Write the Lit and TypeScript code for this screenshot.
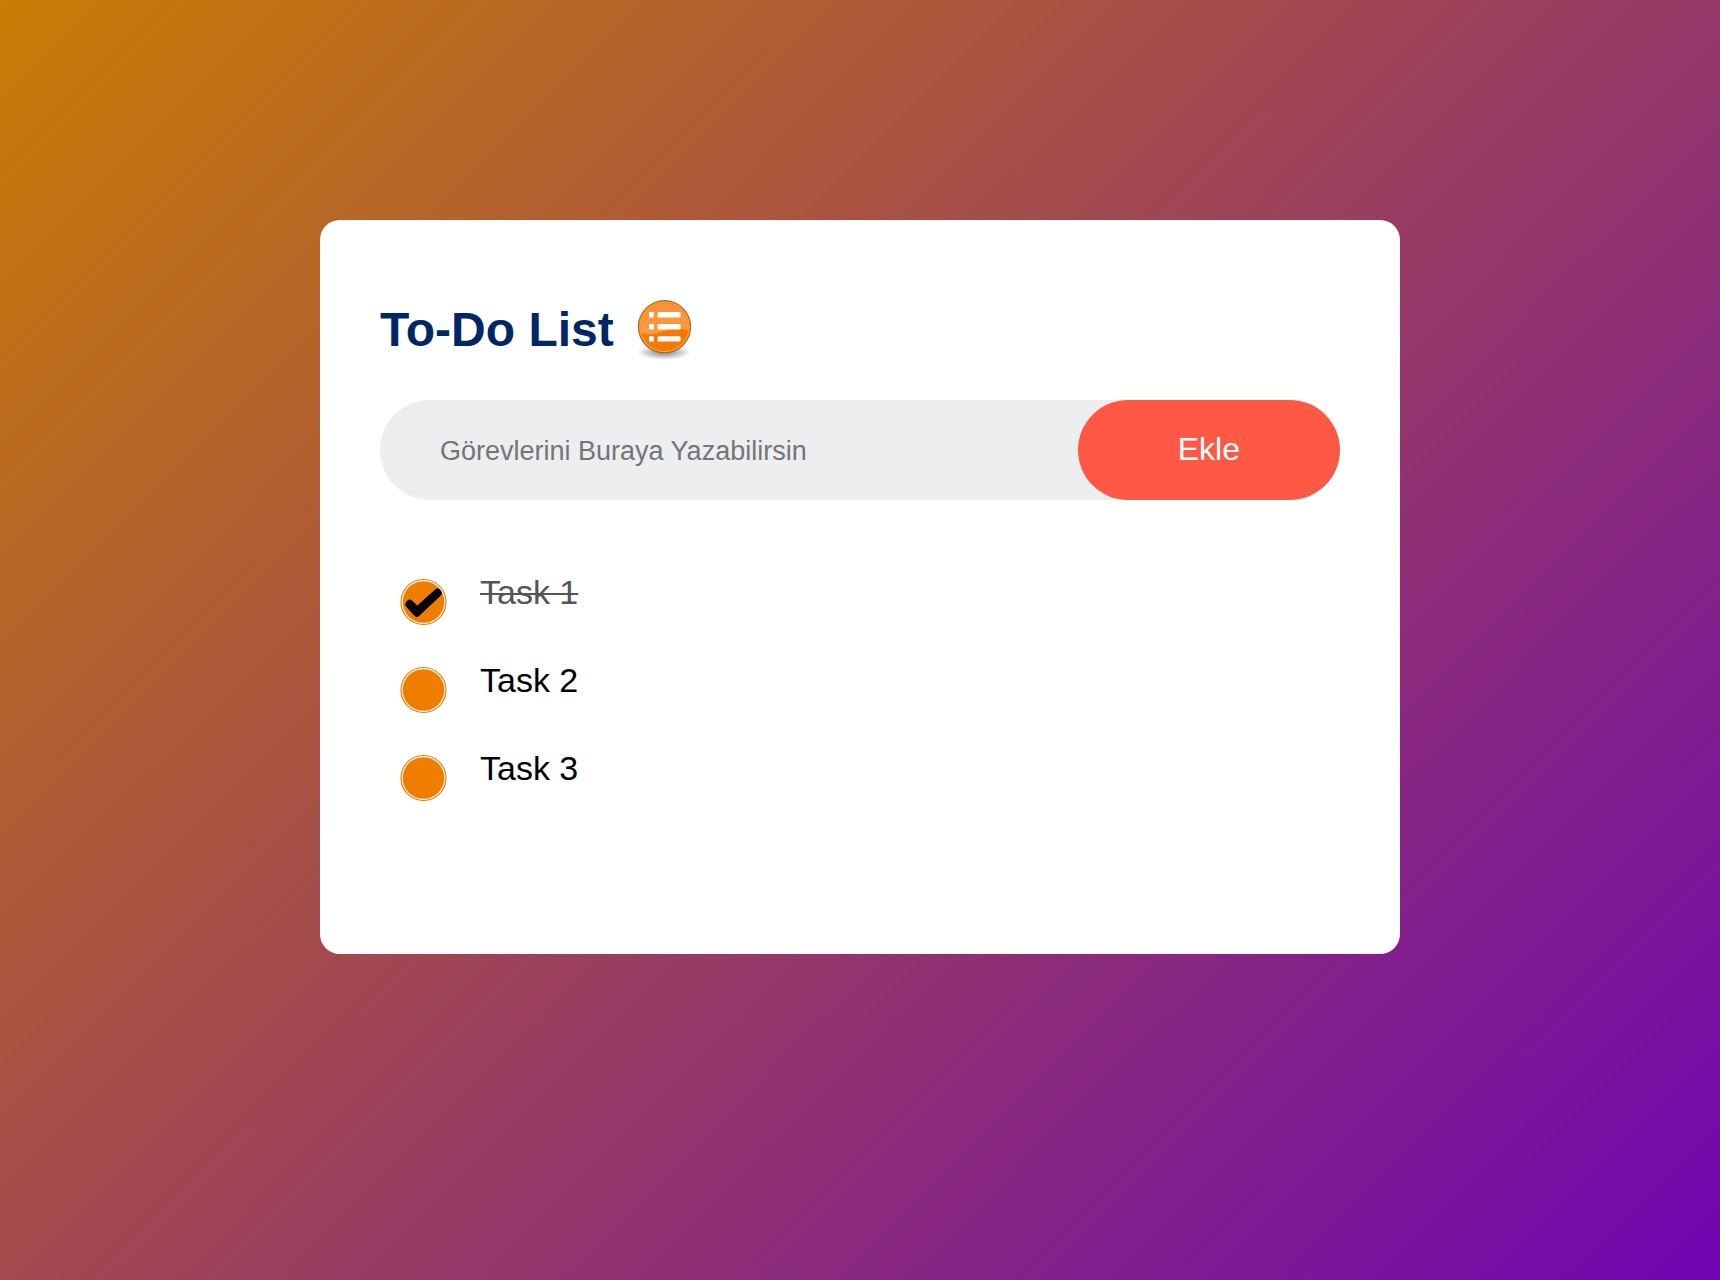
import { LitElement, html, css, svg, nothing } from "lit";
import { customElement, state } from "lit/decorators.js";

interface Task {
  id: number;
  text: string;
  done: boolean;
}

@customElement("app-root")
export class AppRoot extends LitElement {
  static styles = css`
    :host {
      display: block;
      box-sizing: border-box;
      min-height: 100vh;
      padding: 20px;
      overflow: hidden;
      background: linear-gradient(135deg, #c97d04, #6f05b2);
      font-family: "Liberation Sans", Arial, sans-serif;
    }
    .card {
      box-sizing: border-box;
      max-width: 1080px;
      margin: 200px auto 40px;
      padding: 80px 60px 142px;
      border-radius: 20px;
      background: #fff;
    }
    .title {
      display: flex;
      align-items: center;
      gap: 20px;
      margin: 0 0 40px;
      color: #002765;
      font-size: 48px;
      line-height: 60px;
      font-weight: 700;
    }
    .logo {
      width: 60px;
      height: 60px;
    }
    .entry {
      display: flex;
      margin-bottom: 48px;
      border-radius: 50px;
      background: #edeef0;
    }
    .field {
      flex: 1;
      min-width: 0;
      height: 100px;
      box-sizing: border-box;
      padding: 2px 20px 0 60px;
      border: 0;
      outline: 0;
      background: transparent;
      color: #000;
      font: 27px "Liberation Sans", Arial, sans-serif;
    }
    .field::placeholder {
      color: #757575;
    }
    .add {
      padding: 0 100px 2px;
      border: 0;
      border-radius: 50px;
      background: #ff5945;
      color: #fff;
      font: 32px "Liberation Sans", Arial, sans-serif;
      cursor: pointer;
    }
    .tasks {
      display: grid;
      margin: 0;
      padding: 0;
      list-style: none;
    }
    .task {
      display: flex;
      gap: 32px;
      padding: 24px 16px 10px 20px;
      color: #000;
      font-size: 34px;
      line-height: 40px;
      cursor: pointer;
    }
    .check {
      display: grid;
      flex: none;
      width: 48px;
      height: 54px;
      align-items: end;
    }
    .box,
    .mark {
      grid-area: 1 / 1;
      width: 48px;
      height: 48px;
      margin: 0;
    }
    .box {
      appearance: none;
      border-radius: 50%;
      cursor: pointer;
    }
    .mark {
      pointer-events: none;
    }
    .done {
      color: #555;
      text-decoration: line-through 2px;
    }
  `;

  @state() private tasks: Task[] = [
    { id: 1, text: "Task 1", done: true },
    { id: 2, text: "Task 2", done: false },
    { id: 3, text: "Task 3", done: false },
  ];

  private add(event: Event) {
    event.preventDefault();
    const field = this.renderRoot.querySelector<HTMLInputElement>(".field")!;
    const text = field.value.trim();
    if (!text) return;
    this.tasks = [...this.tasks, { id: Date.now(), text, done: false }];
    field.value = "";
  }

  private toggle(id: number) {
    this.tasks = this.tasks.map((t) => (t.id === id ? { ...t, done: !t.done } : t));
  }

  private logo() {
    return html`<svg class="logo" viewBox="0 0 60 60" aria-hidden="true">
      <defs>
        <radialGradient id="shade">
          <stop offset="0" stop-color="#000" stop-opacity="0.5" />
          <stop offset="0.6" stop-color="#000" stop-opacity="0.2" />
          <stop offset="1" stop-color="#000" stop-opacity="0" />
        </radialGradient>
        <linearGradient id="gloss" x1="0" y1="0" x2="0" y2="1">
          <stop offset="0" stop-color="#f8923a" />
          <stop offset="1" stop-color="#fa9a42" />
        </linearGradient>
      </defs>
      <ellipse cx="30" cy="52" rx="27" ry="8" fill="url(#shade)" />
      <circle cx="30.5" cy="26.8" r="26.7" fill="#a8691f" />
      <circle cx="30.5" cy="26.8" r="25.5" fill="#fba23a" />
      <circle cx="30.5" cy="26.8" r="24.2" fill="#f57900" />
      <path d="M7 32.8A24.2 24.2 0 1 1 54.7 27Q54.7 29 54.3 30.5C46 27.5 36 28.5 27 32Q16 36 7 32.8Z" fill="url(#gloss)" />
      <g fill="#fff">
        <rect x="15" y="12" width="5" height="5.4" rx="1.2" />
        <rect x="15" y="24" width="5" height="5.4" rx="1.2" />
        <rect x="15" y="36.2" width="5" height="5.4" rx="1.2" />
        <rect x="23.6" y="12" width="23" height="5.4" rx="1.2" />
        <rect x="23.6" y="24" width="23" height="5.4" rx="1.2" />
        <rect x="23.6" y="36.2" width="23" height="5.4" rx="1.2" />
      </g>
    </svg>`;
  }

  private mark(done: boolean) {
    return html`<svg class="mark" viewBox="0 0 48 48" aria-hidden="true">
      <circle cx="23.5" cy="24" r="22.5" fill="#fff" stroke="#ef7d00" stroke-width="1.2" />
      <circle cx="23.5" cy="24" r="20.8" fill="#ef7d00" />
      ${done
        ? svg`<path d="M6.6 24.2Q4.6 26.4 6.6 28.6L14.8 37.6Q16.8 39.6 19 37.6L40.3 17.6Q42.4 15.2 40.6 12.8L39.6 11.6Q37.6 10 35.4 11.8L17.3 28L11.6 22.6Q9.4 21 7.4 23Z" fill="#000" stroke="#000" stroke-width="1" stroke-linejoin="round" />`
        : nothing}
    </svg>`;
  }

  render() {
    return html`
      <main class="card">
        <h1 class="title">To-Do List ${this.logo()}</h1>
        <form class="entry" @submit=${this.add}>
          <input
            class="field"
            type="text"
            aria-label="Görevlerini Buraya Yazabilirsin"
            placeholder="Görevlerini Buraya Yazabilirsin"
          />
          <button class="add" type="submit">Ekle</button>
        </form>
        <ul class="tasks">
          ${this.tasks.map(
            (task) => html`<li>
              <label class="task">
                <span class="check">
                  <input class="box" type="checkbox" .checked=${task.done} @change=${() => this.toggle(task.id)} />
                  ${this.mark(task.done)}
                </span>
                <span class=${task.done ? "done" : "open"}>${task.text}</span>
              </label>
            </li>`
          )}
        </ul>
      </main>
    `;
  }
}
